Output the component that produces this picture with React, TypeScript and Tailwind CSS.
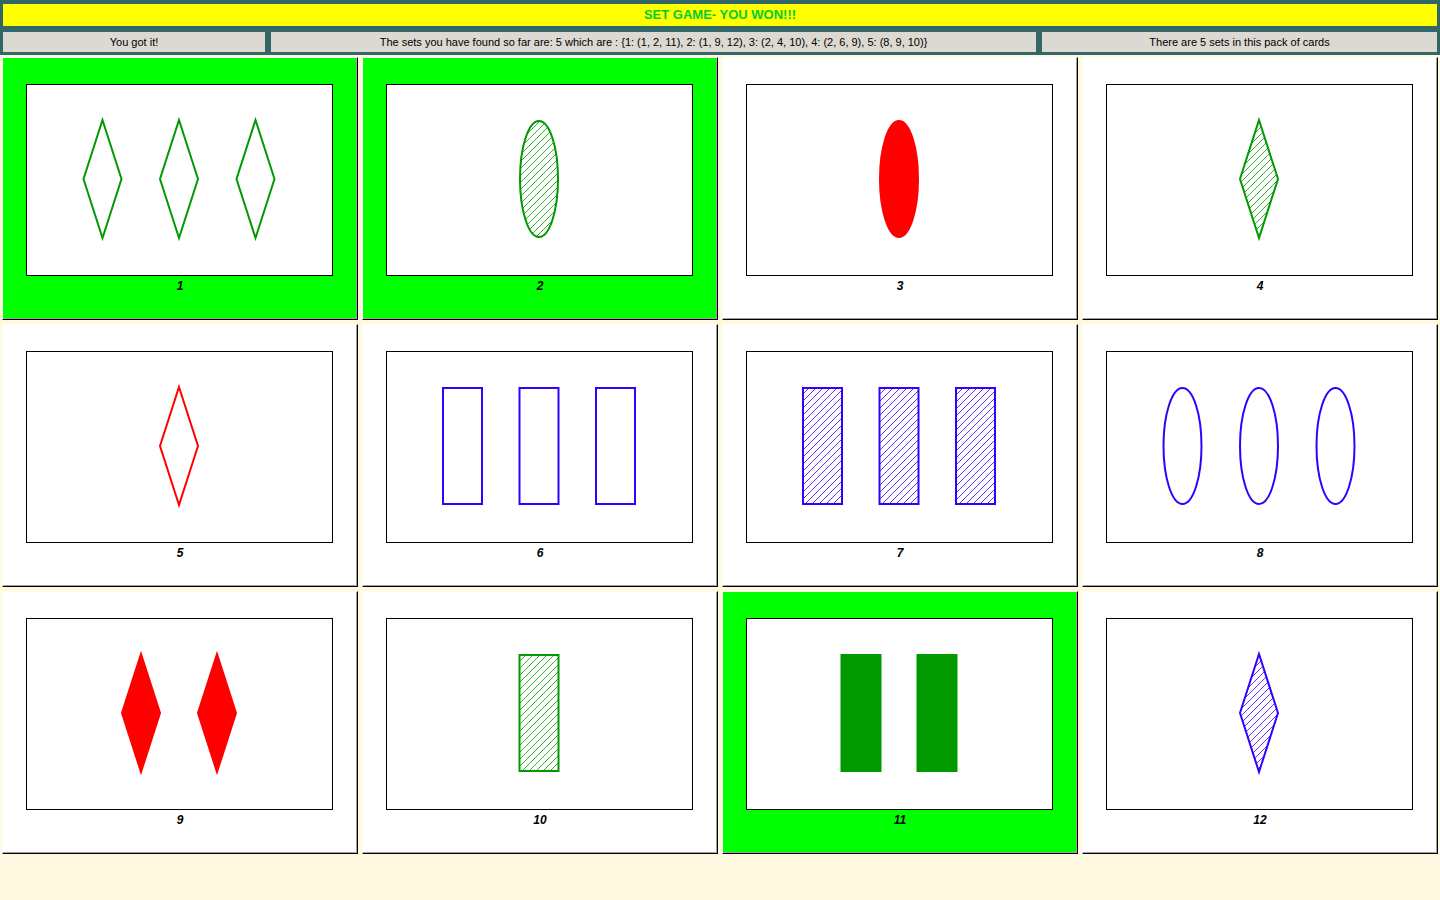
type Shape = "diamond" | "oval" | "rect";
type Fill = "empty" | "striped" | "solid";

interface Card {
  n: number;
  count: number;
  shape: Shape;
  color: string;
  fill: Fill;
  picked?: boolean;
}

const GREEN = "#009900";
const RED = "#ff0000";
const BLUE = "#3300ff";

const CARDS: Card[] = [
  { n: 1, count: 3, shape: "diamond", color: GREEN, fill: "empty", picked: true },
  { n: 2, count: 1, shape: "oval", color: GREEN, fill: "striped", picked: true },
  { n: 3, count: 1, shape: "oval", color: RED, fill: "solid" },
  { n: 4, count: 1, shape: "diamond", color: GREEN, fill: "striped" },
  { n: 5, count: 1, shape: "diamond", color: RED, fill: "empty" },
  { n: 6, count: 3, shape: "rect", color: BLUE, fill: "empty" },
  { n: 7, count: 3, shape: "rect", color: BLUE, fill: "striped" },
  { n: 8, count: 3, shape: "oval", color: BLUE, fill: "empty" },
  { n: 9, count: 2, shape: "diamond", color: RED, fill: "solid" },
  { n: 10, count: 1, shape: "rect", color: GREEN, fill: "striped" },
  { n: 11, count: 2, shape: "rect", color: GREEN, fill: "solid", picked: true },
  { n: 12, count: 1, shape: "diamond", color: BLUE, fill: "striped" },
];

// x centres of the symbols inside the white panel, by count
const CENTERS: Record<number, number[]> = {
  1: [152],
  2: [114, 190],
  3: [75.5, 152, 228.5],
};

function Glyph({ shape, cx, color, fill, id }: { shape: Shape; cx: number; color: string; fill: Fill; id: string }) {
  const paint = fill === "solid" ? color : fill === "striped" ? `url(#${id})` : "none";
  if (shape === "diamond") {
    return (
      <polygon
        points={`${cx},35 ${cx + 19},94 ${cx},153 ${cx - 19},94`}
        fill={paint}
        stroke={color}
        strokeWidth="2"
      />
    );
  }
  if (shape === "oval") {
    return <ellipse cx={cx} cy={94} rx={19} ry={58} fill={paint} stroke={color} strokeWidth="2" />;
  }
  return <rect x={cx - 19.5} y={36} width={39} height={116} fill={paint} stroke={color} strokeWidth="2" />;
}

function SetCard({ card }: { card: Card }) {
  const id = `hatch${card.n}`;
  return (
    <div
      className={`h-[263px] border-t border-l border-[#fffdf2] border-r-black border-b-black border-r border-b shadow-[inset_-1px_-1px_0_#a0a0a0] pt-[26px] ${
        card.picked ? "bg-[#00ff00]" : "bg-white"
      }`}
    >
      <div className="ml-[23px] h-[192px] w-[307px] border border-black bg-white">
        <svg viewBox="0 0 305 190" className="block h-[190px] w-[305px]">
          <defs>
            <pattern id={id} width="7" height="7" patternUnits="userSpaceOnUse">
              <path d="M -1,8 L 8,-1" stroke={card.color} strokeWidth="0.8" />
            </pattern>
          </defs>
          {CENTERS[card.count].map((cx) => (
            <Glyph key={cx} shape={card.shape} cx={cx} color={card.color} fill={card.fill} id={id} />
          ))}
        </svg>
      </div>
      <div
        className="mt-[3px] text-center text-[12px] font-bold italic leading-[14px] text-black"
        style={{ fontFamily: "'Liberation Sans', Arial, sans-serif" }}
      >
        {card.n}
      </div>
    </div>
  );
}

export default function App() {
  return (
    <div className="min-h-screen bg-[#fff9e2]" style={{ fontFamily: "'Liberation Sans', Arial, sans-serif" }}>
      <div className="bg-[#336666] px-[3px] pt-[4px] pb-[3px]">
        <div className="flex h-[22px] items-center justify-center bg-[#ffff00] text-[13px] font-bold text-[#00cc33]">
          SET GAME- YOU WON!!!
        </div>
        <div className="mt-[6px] flex h-[20px] gap-[6px] text-[11px] text-black">
          <div className="flex w-[262px] items-center justify-center bg-[#dcd8d2]">You got it!</div>
          <div className="flex w-[765px] items-center justify-center bg-[#dcd8d2]">
            The sets you have found so far are: 5 which are : {"{1: (1, 2, 11), 2: (1, 9, 12), 3: (2, 4, 10), 4: (2, 6, 9), 5: (8, 9, 10)}"}
          </div>
          <div className="flex flex-1 items-center justify-center bg-[#dcd8d2]">There are 5 sets in this pack of cards</div>
        </div>
      </div>
      <div className="mt-[2px] grid grid-cols-4 gap-x-[4px] gap-y-[4px] px-[2px]">
        {CARDS.map((c) => (
          <SetCard key={c.n} card={c} />
        ))}
      </div>
    </div>
  );
}
